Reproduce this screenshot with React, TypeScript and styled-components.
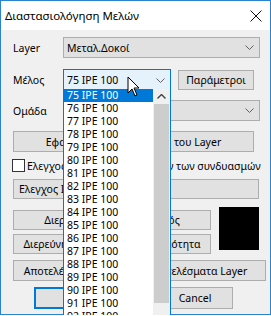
import React from 'react';
import styled, { createGlobalStyle } from 'styled-components';

const GlobalStyle = createGlobalStyle`
  html, body {
    margin: 0;
    padding: 0;
    background: #ffffff;
  }
  body {
    font-family: "Noto Sans", "Open Sans", sans-serif;
    font-size: 10.5px;
    color: #000;
  }
`;

const Window = styled.div`
  position: relative;
  width: 271px;
  height: 315px;
  box-sizing: border-box;
  border: 1px solid #2a83d2;
  background: #f0f0f0;
  display: flex;
  flex-direction: column;
`;

const TitleBar = styled.div`
  height: 29px;
  flex: none;
  background: #ffffff;
  display: flex;
  align-items: center;
  justify-content: space-between;
  padding: 0 8px 0 4px;
  font-size: 11.5px;
`;

const Body = styled.div`
  display: flex;
  flex-direction: column;
  padding: 0 0 0 12px;
`;

const Row = styled.div<{ $mt: number; $h: number }>`
  display: flex;
  align-items: center;
  margin-top: ${({ $mt }) => $mt}px;
  height: ${({ $h }) => $h}px;
  white-space: nowrap;
`;

const Label = styled.span`
  width: 50px;
  flex: none;
`;

const Combo = styled.div<{ $w: number; $focused?: boolean }>`
  box-sizing: border-box;
  width: ${({ $w }) => $w}px;
  height: 100%;
  display: flex;
  align-items: center;
  justify-content: space-between;
  padding: 0 5px 0 3px;
  border: 1px solid ${({ $focused }) => ($focused ? '#0078d7' : '#adadad')};
  background: ${({ $focused }) => ($focused ? '#e5f1fb' : '#e1e1e1')};
`;

const Button = styled.div<{ $w: number; $ml?: number; $h?: number; $pr?: number; $default?: boolean }>`
  box-sizing: border-box;
  width: ${({ $w }) => $w}px;
  height: ${({ $h }) => $h ?? 20}px;
  margin-left: ${({ $ml }) => $ml ?? 0}px;
  padding-right: ${({ $pr }) => $pr ?? 0}px;
  flex: none;
  display: flex;
  align-items: center;
  justify-content: center;
  white-space: nowrap;
  border: 1px solid ${({ $default }) => ($default ? '#0078d7' : '#adadad')};
  box-shadow: ${({ $default }) => ($default ? 'inset 0 0 0 1px #0078d7' : 'none')};
  background: #e1e1e1;
`;

const WideField = styled.div`
  box-sizing: border-box;
  width: 246px;
  height: 100%;
  display: flex;
  align-items: center;
  padding-left: 5px;
  border: 1px solid #adadad;
  background: #e1e1e1;
`;

const Check = styled.span`
  box-sizing: border-box;
  width: 13px;
  height: 13px;
  margin-left: -1px;
  margin-right: 2px;
  border: 1px solid #333333;
  background: #ffffff;
  flex: none;
`;

const ButtonColumn = styled.div`
  display: flex;
  flex-direction: column;
  gap: 4px;
  align-self: flex-start;
  padding-top: 3px;
`;

const Swatch = styled.div`
  width: 40px;
  height: 43px;
  margin-left: 8px;
  align-self: flex-start;
  background: #000000;
`;

const DropList = styled.div`
  position: absolute;
  left: 62px;
  top: 88px;
  width: 108px;
  height: 228px;
  box-sizing: border-box;
  border: 1px solid #0078d7;
  border-top: none;
  background: #ffffff;
  display: flex;
  overflow: hidden;
`;

const Items = styled.div`
  flex: 1;
  display: flex;
  flex-direction: column;
`;

const Item = styled.div<{ $selected?: boolean }>`
  height: 13px;
  line-height: 13px;
  padding-left: 3px;
  white-space: nowrap;
  background: ${({ $selected }) => ($selected ? '#0078d7' : 'transparent')};
  color: ${({ $selected }) => ($selected ? '#ffffff' : '#000000')};
`;

const ScrollBar = styled.div`
  width: 17px;
  flex: none;
  background: #f0f0f0;
  display: flex;
  flex-direction: column;
`;

const ScrollArrow = styled.div`
  height: 15px;
  display: flex;
  align-items: center;
  justify-content: center;
`;

const Thumb = styled.div`
  height: 199px;
  margin: 0 1px;
  background: #cdcdcd;
`;

const Cursor = styled.svg`
  position: absolute;
  left: 126px;
  top: 75px;
`;

const Chevron = ({ up }: { up?: boolean }) => (
  <svg width="9" height="5" viewBox="0 0 9 5">
    <path
      d={up ? 'M0.5 4.5 L4.5 0.5 L8.5 4.5' : 'M0.5 0.5 L4.5 4.5 L8.5 0.5'}
      fill="none"
      stroke={up ? '#404040' : '#606060'}
      strokeWidth={up ? 1.4 : 1}
    />
  </svg>
);

const CloseIcon = () => (
  <svg width="12" height="12" viewBox="0 0 12 12">
    <path d="M0.5 0.5 L11.5 11.5 M11.5 0.5 L0.5 11.5" stroke="#111" strokeWidth="1" />
  </svg>
);

const items = Array.from({ length: 18 }, (_, i) => `${75 + i} IPE 100`);

export default function App() {
  return (
    <>
      <GlobalStyle />
      <Window>
        <TitleBar>
          <span>Διαστασιολόγηση Μελών</span>
          <CloseIcon />
        </TitleBar>
        <Body>
          <Row $mt={7} $h={21}>
            <Label>Layer</Label>
            <Combo $w={197}>
              <span>Μεταλ.Δοκοί</span>
              <Chevron />
            </Combo>
          </Row>
          <Row $mt={11} $h={22}>
            <Label>Μέλος</Label>
            <Combo $w={108} $focused>
              <span>75 IPE 100</span>
              <Chevron />
            </Combo>
            <Button $w={76} $ml={7}>Παράμετροι</Button>
          </Row>
          <Row $mt={9} $h={21}>
            <Label>Ομάδα</Label>
            <Combo $w={197}>
              <span></span>
              <Chevron />
            </Combo>
          </Row>
          <Row $mt={10} $h={21}>
            <Button $w={241} $h={21}>Εφαρμογή σε όλα τα μέλη του Layer</Button>
          </Row>
          <Row $mt={7} $h={13}>
            <Check />
            <span>Ελεγχος για το σύνολο ή όλων των συνδυασμών</span>
          </Row>
          <Row $mt={7} $h={20}>
            <WideField>Ελεγχος Ισχύος</WideField>
          </Row>
          <Row $mt={8} $h={44}>
            <ButtonColumn>
              <Button $w={198}>Διερεύνηση Ανασχεδιασμός</Button>
              <Button $w={198}>Διερεύνηση για την Οικονομικότητα</Button>
            </ButtonColumn>
            <Swatch />
          </Row>
          <Row $mt={9} $h={21}>
            <Button $w={253} $h={21} $pr={8}>Αποτελέσματα Ομάδων - Αποτελέσματα Layer</Button>
          </Row>
          <Row $mt={6} $h={22}>
            <Button $w={76} $ml={21} $h={22} $default>OK</Button>
            <Button $w={76} $ml={47} $h={22}>Cancel</Button>
          </Row>
        </Body>
        <DropList>
          <Items>
            {items.map((t, i) => (
              <Item key={t} $selected={i === 0}>{t}</Item>
            ))}
          </Items>
          <ScrollBar>
            <ScrollArrow>
              <Chevron up />
            </ScrollArrow>
            <Thumb />
          </ScrollBar>
        </DropList>
        <Cursor width="13" height="21" viewBox="0 0 13 21">
          <path
            d="M1 1 L1 17 L5 13 L8 20 L10 19 L7 12 L12 12 Z"
            fill="#ffffff"
            stroke="#000000"
            strokeWidth="1"
            strokeLinejoin="round"
          />
        </Cursor>
      </Window>
    </>
  );
}
